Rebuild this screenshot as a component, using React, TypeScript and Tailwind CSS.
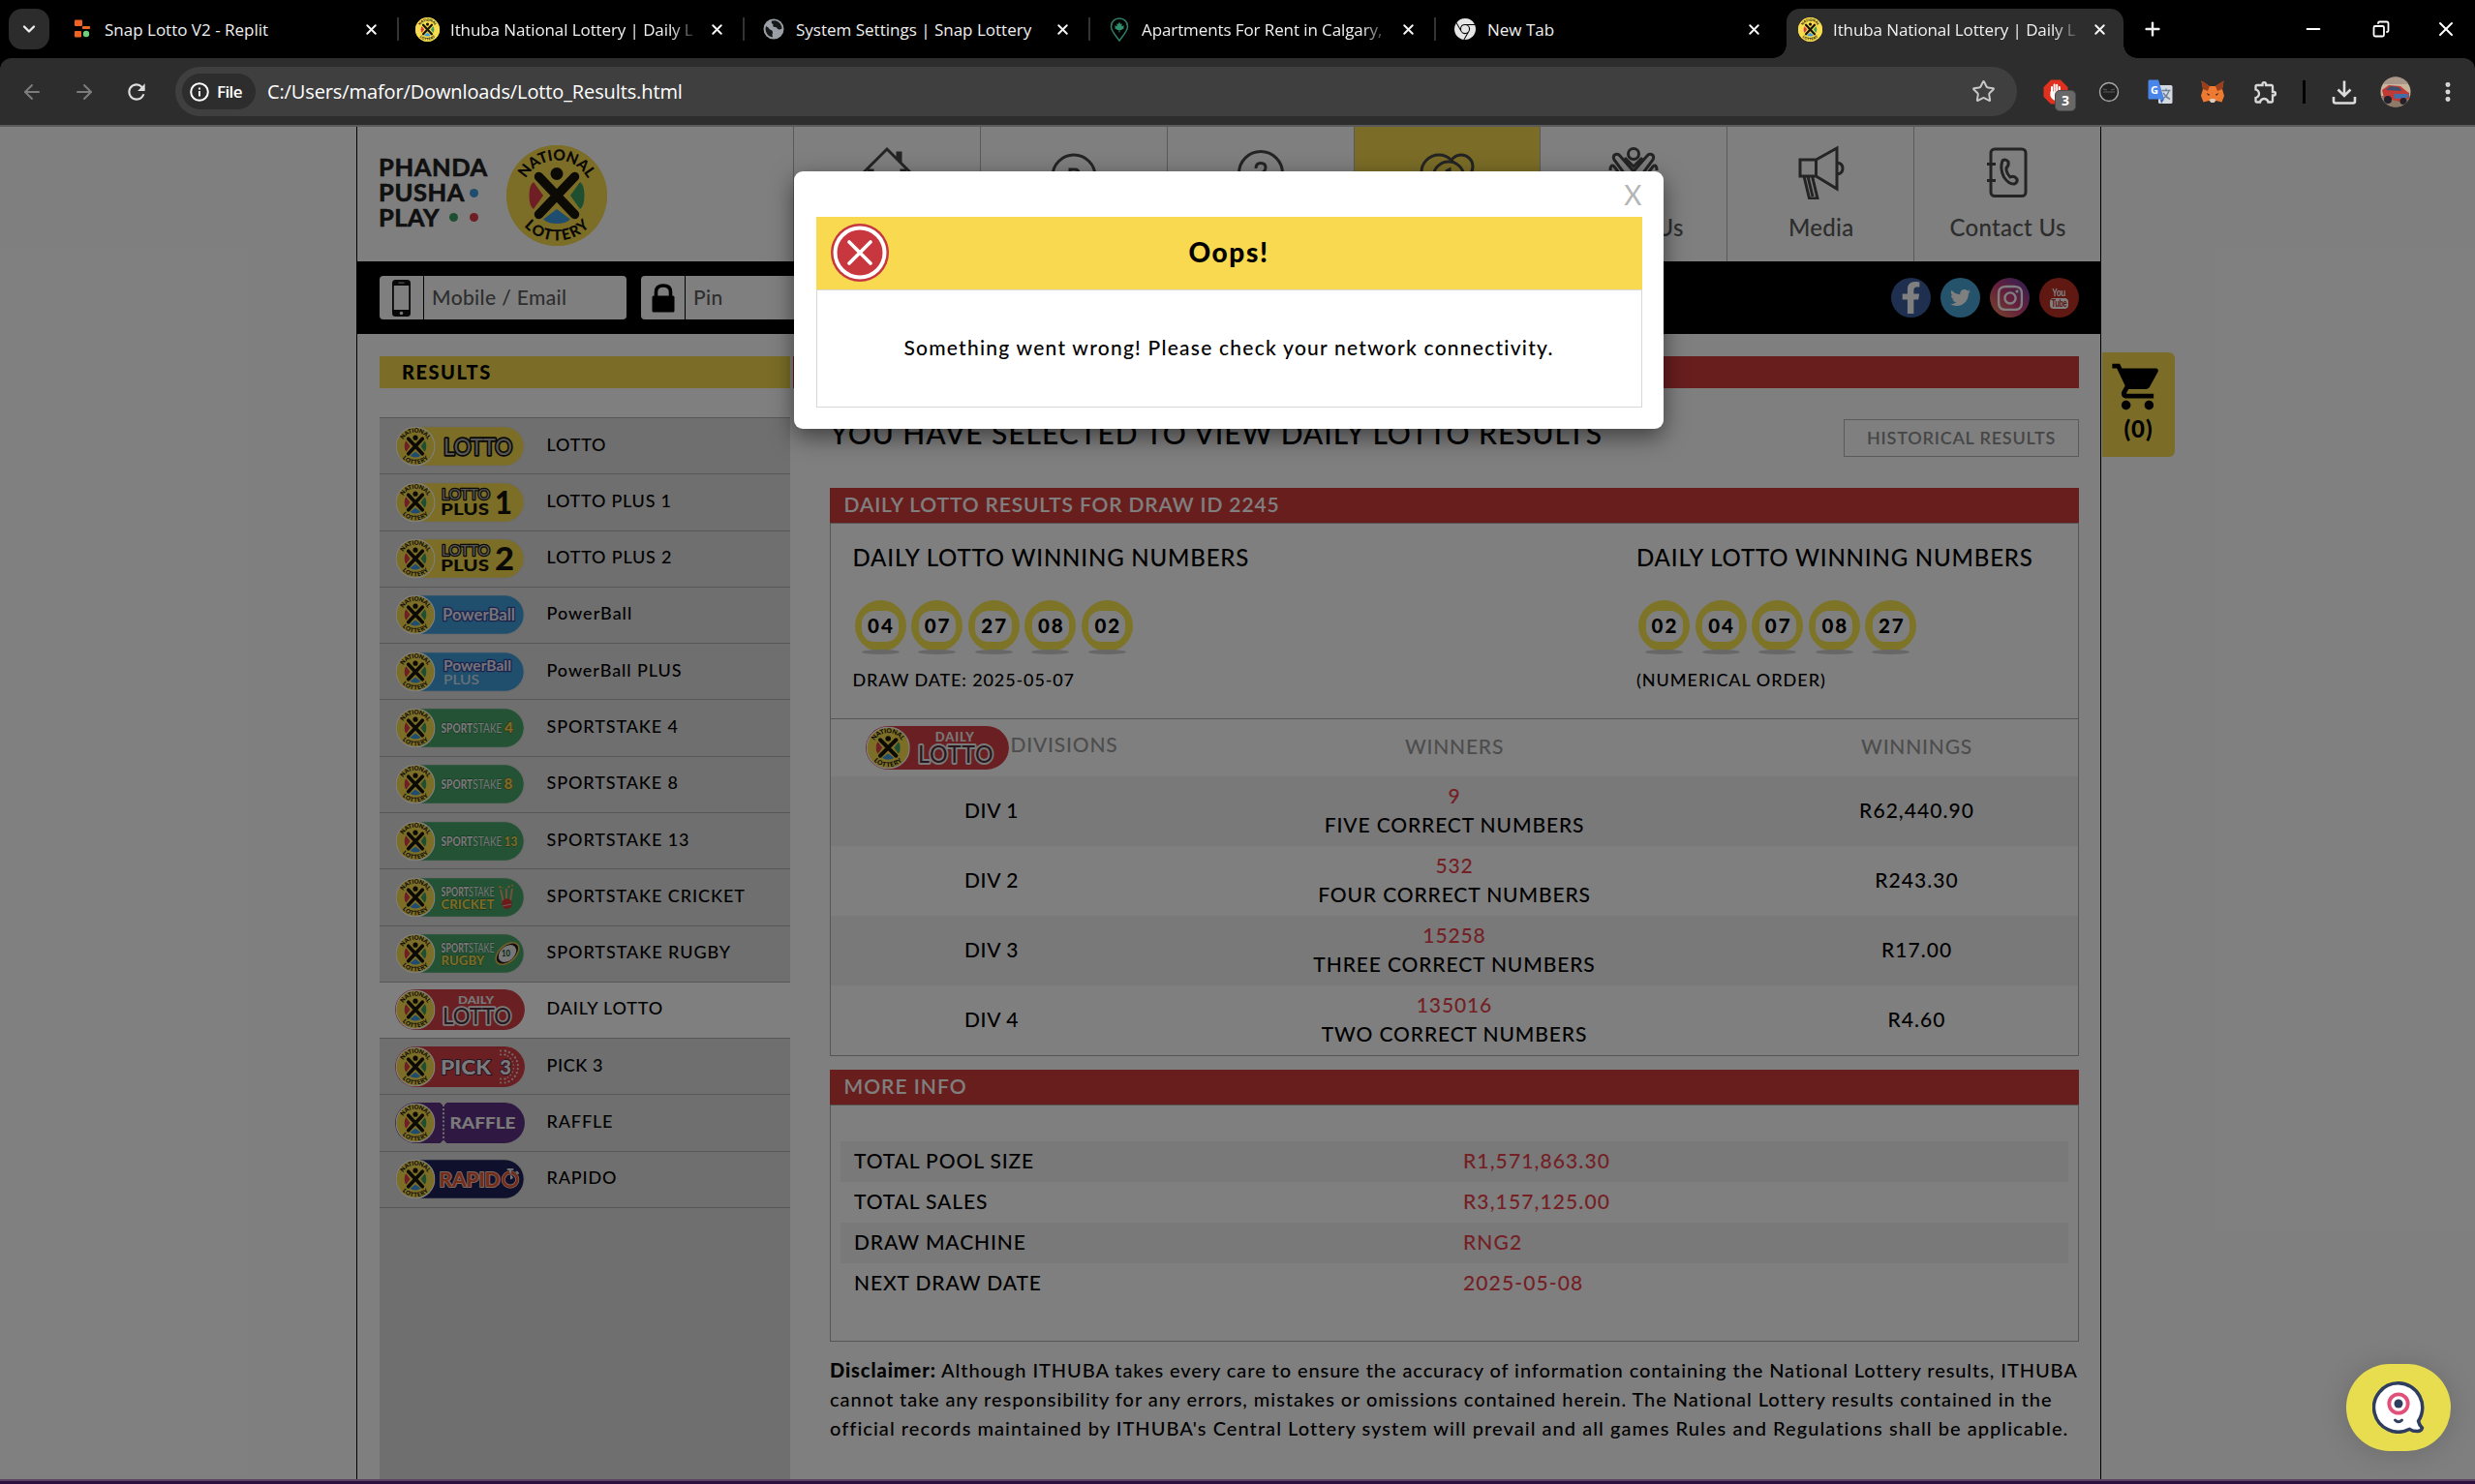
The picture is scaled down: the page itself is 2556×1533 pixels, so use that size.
import React from 'react';
import { ArrowLeft, ArrowRight, ChevronDown, Plus, Star, X, Minus, Copy, MoreVertical } from 'lucide-react';
import { FaTwitter, FaFacebookF, FaInstagram } from 'react-icons/fa';
import { SiGooglechrome } from 'react-icons/si';
import { MdShoppingCart, MdOutlineExtension, MdRefresh } from 'react-icons/md';

/* ---------- National Lottery roundel ---------- */

function Roundel({ id, x = 0, y = 0, size = 104, ring = false, fill = '#f8dc4e' }: { id: string; x?: number; y?: number; size?: number; ring?: boolean; fill?: string }) {
  return (
    <svg x={x} y={y} width={size} height={size} viewBox="0 0 104 104">
      <defs>
        <path id={`${id}-top`} d="M15.5 52 A36.5 36.5 0 0 1 88.5 52" />
        <path id={`${id}-bot`} d="M5.5 52 A46.5 46.5 0 0 0 98.5 52" />
      </defs>
      <circle cx="52" cy="52" r="52" fill={ring ? '#fff' : fill} />
      <circle cx="52" cy="52" r={ring ? 49 : 52} fill={fill} />
      <path d="M38 52 L28 38 Q23.500 41 23.500 52 Q23.500 63 28 66 Z" fill="#dc3c48" />
      <path d="M66 52 L76 38 Q80.500 41 80.500 52 Q80.500 63 76 66 Z" fill="#3f9e63" />
      <path d="M52 66 L38 76.500 Q43 81 52 81 Q61 81 66 76.500 Z" fill="#3f9be0" />
      <path d="M33.500 32.500 L70.500 71.500 M70.500 32.500 L33.500 71.500" stroke="#191408" strokeWidth="9.500" strokeLinecap="round" />
      <circle cx="52" cy="29.500" r="6.500" fill="#191408" />
      <g fontFamily="Lato, sans-serif" fontWeight="900" fontSize="15.500" fill="#14110a">
        <text textAnchor="middle">
          <textPath href={`#${id}-top`} startOffset="50%" textLength="78">NATIONAL</textPath>
        </text>
        <text textAnchor="middle">
          <textPath href={`#${id}-bot`} startOffset="50%" textLength="76">LOTTERY</textPath>
        </text>
      </g>
    </svg>
  );
}

/* ---------- Game badges ---------- */

type Game = { key: string; label: string; color: string; art: React.ReactNode; ring?: boolean; active?: boolean; ls: string };

function Badge({ id, color, art, ring = true, w = 134, h = 42 }: { id: string; color: string; art: React.ReactNode; ring?: boolean; w?: number; h?: number }) {
  return (
    <svg width={w} height={h} viewBox="0 0 134 42" preserveAspectRatio="none" className="block shrink-0">
      <rect x="0.700" y="0.700" width="132.600" height="40.600" rx="20.300" fill={color} stroke={ring ? '#d8d8d8' : color} strokeWidth="1.200" />
      <Roundel id={id} x={0.5} y={0.5} size={41} ring fill="#f8dc4e" />
      <g fontFamily="Lato, sans-serif">{art}</g>
    </svg>
  );
}

function Outlined({ x, y, size, len, children, stroke = '#15130c', fill = '#aaa', sw = 3, weight = 400 }: { x: number; y: number; size: number; len: number; children: string; stroke?: string; fill?: string; sw?: number; weight?: number }) {
  return (
    <text x={x} y={y} fontSize={size} fontWeight={weight} textLength={len} lengthAdjust="spacingAndGlyphs" fill={fill} stroke={stroke} strokeWidth={sw} strokeLinejoin="round" paintOrder="stroke">
      {children}
    </text>
  );
}

function Solid({ x, y, size, len, children, fill, weight = 900 }: { x: number; y: number; size: number; len: number; children: string; fill: string; weight?: number }) {
  return (
    <text x={x} y={y} fontSize={size} fontWeight={weight} textLength={len} lengthAdjust="spacingAndGlyphs" fill={fill}>
      {children}
    </text>
  );
}

const sportStake = (y: number, len = 63, size = 14) => (
  <>
    <Outlined x={47.500} y={y} size={size} len={len * 0.52} weight={900} fill="#f0f0f0" stroke="#1d5a38" sw={1}>SPORT</Outlined>
    <Outlined x={47.500 + len * 0.52} y={y} size={size} len={len * 0.48} weight={400} fill="#f0f0f0" stroke="#1d5a38" sw={0.500}>STAKE</Outlined>
  </>
);

const dailyArt = (
  <>
    <Solid x={65} y={14.500} size={12} len={37} fill="#f0f0f0">DAILY</Solid>
    <Outlined x={49} y={35.500} size={23} len={71} fill="#50303a" stroke="#f4f4f4" sw={3.600}>LOTTO</Outlined>
  </>
);

const games: Game[] = [
  { key: 'lotto', label: 'LOTTO', color: '#f8dc4e', ls: 'tracking-[0.79px]', art: <Outlined x={50} y={29.500} size={24} len={71} sw={3.500}>LOTTO</Outlined> },
  {
    key: 'plus1', label: 'LOTTO PLUS 1', color: '#f8dc4e', ls: 'tracking-[0.75px]',
    art: (<><Outlined x={48} y={18} size={15.500} len={50} sw={2.400}>LOTTO</Outlined><Solid x={47} y={34} size={16.500} len={50} fill="#15130c">PLUS</Solid><Solid x={103} y={32.500} size={33} len={18} fill="#15130c">1</Solid></>),
  },
  {
    key: 'plus2', label: 'LOTTO PLUS 2', color: '#f8dc4e', ls: 'tracking-[0.8px]',
    art: (<><Outlined x={48} y={18} size={15.500} len={50} sw={2.400}>LOTTO</Outlined><Solid x={47} y={34} size={16.500} len={50} fill="#15130c">PLUS</Solid><Solid x={103} y={32.500} size={33} len={20} fill="#15130c">2</Solid></>),
  },
  { key: 'pb', label: 'PowerBall', color: '#3f9edb', ls: 'tracking-[1px]', art: <Outlined x={49} y={27} size={16.500} len={75} weight={700} fill="#e8e8f4" stroke="#35489c" sw={2.600}>PowerBall</Outlined> },
  {
    key: 'pbp', label: 'PowerBall PLUS', color: '#3f9edb', ls: 'tracking-[0.92px]',
    art: (<><Outlined x={50} y={19.500} size={15} len={70} weight={700} fill="#e8e8f4" stroke="#35489c" sw={2.600}>PowerBall</Outlined><Solid x={50} y={34} size={14} len={37} fill="#d5e4f2" weight={500}>PLUS</Solid></>),
  },
  { key: 'ss4', label: 'SPORTSTAKE 4', color: '#46a468', ls: 'tracking-[0.9px]', art: (<>{sportStake(25.500)}<Outlined x={113} y={26} size={15} len={9} weight={900} fill="#f5d94e" stroke="#7a5a20" sw={1.200}>4</Outlined></>) },
  { key: 'ss8', label: 'SPORTSTAKE 8', color: '#46a468', ls: 'tracking-[0.9px]', art: (<>{sportStake(25.500)}<Outlined x={112.500} y={26} size={15} len={9} weight={900} fill="#f5d94e" stroke="#7a5a20" sw={1.200}>8</Outlined></>) },
  { key: 'ss13', label: 'SPORTSTAKE 13', color: '#46a468', ls: 'tracking-[0.92px]', art: (<>{sportStake(25.500)}<Outlined x={112.500} y={25.500} size={13.500} len={14} weight={900} fill="#f5d94e" stroke="#1d5a38" sw={0.800}>13</Outlined></>) },
  {
    key: 'cricket', label: 'SPORTSTAKE CRICKET', color: '#46a468', ls: 'tracking-[0.93px]',
    art: (
      <>
        {sportStake(19.500, 55, 12.500)}
        <Outlined x={47.500} y={32.500} size={12.500} len={55} weight={900} fill="#f5d94e" stroke="#1d5a38" sw={0.800}>CRICKET</Outlined>
        <path d="M109 13 L113 31 M115 12 V30 M121 12 L118 31" stroke="#e8a878" strokeWidth="1.800" />
        <path d="M107 10 L112 11.500 M116 10.500 L122 8.500" stroke="#e8b04e" strokeWidth="1.600" strokeDasharray="3 1.500" />
        <circle cx="115.500" cy="27.500" r="5.200" fill="#d83434" />
        <path d="M111 30 L120 28" stroke="#ddd" strokeWidth="0.800" />
      </>
    ),
  },
  {
    key: 'rugby', label: 'SPORTSTAKE RUGBY', color: '#46a468', ls: 'tracking-[0.94px]',
    art: (
      <>
        {sportStake(19.500, 55, 12.500)}
        <Outlined x={47.500} y={32.500} size={12.500} len={45} weight={900} fill="#f5d94e" stroke="#1d5a38" sw={0.800}>RUGBY</Outlined>
        <g transform="rotate(-42 116 21)">
          <ellipse cx="116" cy="21" rx="14" ry="8.500" fill="#1c1c1c" stroke="#e8bd4e" strokeWidth="1.600" />
          <ellipse cx="116" cy="21" rx="10.500" ry="7.300" fill="#efefef" />
        </g>
        <Solid x={110} y={23.500} size={8.500} len={9} fill="#1d5a38">10</Solid>
      </>
    ),
  },
  { key: 'daily', label: 'DAILY LOTTO', color: '#d43e44', ring: false, active: true, ls: 'tracking-[0.85px]', art: dailyArt },
  {
    key: 'pick3', label: 'PICK 3', color: '#d43e44', ring: false, ls: 'tracking-[0.6px]',
    art: (
      <>
        <Outlined x={47} y={28.500} size={21.500} len={52} weight={900} fill="#f4f4f4" stroke="#3a2a50" sw={1.800}>PICK</Outlined>
        <Outlined x={108} y={28.500} size={21.500} len={12} weight={900} fill="#f4f4f4" stroke="#3a2a50" sw={1.800}>3</Outlined>
        <path d="M109 4.500 A17 17 0 0 1 109 37.500" fill="none" stroke="#f0d0d0" strokeWidth="2.200" strokeDasharray="0.100 4" strokeLinecap="round" transform="translate(5 0)" />
        <path d="M109 8.500 A13 13 0 0 1 109 33.500" fill="none" stroke="#f0c0c0" strokeWidth="1.700" strokeDasharray="0.100 3.600" strokeLinecap="round" transform="translate(4 0)" />
        <path d="M109 4.500 H114 M109 37.500 H114 M109 8.500 H114 M109 33.500 H114" stroke="#f0d0d0" strokeWidth="2" strokeDasharray="0.100 4.500" strokeLinecap="round" />
      </>
    ),
  },
  {
    key: 'raffle', label: 'RAFFLE', color: '#5e3182', ring: false, ls: 'tracking-[0.87px]',
    art: (
      <>
        <path d="M50 3 V39" stroke="#e8e8e8" strokeWidth="2.200" strokeDasharray="0.100 4" strokeLinecap="round" />
        <path d="M46.500 0 L50 3.500 L53.500 0 Z M46.500 42 L50 38.500 L53.500 42 Z" fill="#dedede" />
        <Solid x={56.500} y={26.500} size={17.500} len={68} fill="#f4f4f4">RAFFLE</Solid>
      </>
    ),
  },
  {
    key: 'rapido', label: 'RAPIDO', color: '#1c2058', ls: 'tracking-[0.85px]',
    art: (
      <>
        <Outlined x={45.500} y={28.500} size={20} len={63} weight={700} fill="#e8562e" stroke="#f4d0c4" sw={2}>RAPID</Outlined>
        <circle cx="119" cy="21.500" r="7.200" fill="none" stroke="#f4d0c4" strokeWidth="4.200" />
        <circle cx="119" cy="21.500" r="7.200" fill="none" stroke="#e8562e" strokeWidth="2.600" />
        <path d="M119 21.500 V16.500 A5 5 0 0 1 122 20 Z" fill="#f0f0f0" />
        <path d="M116.500 11 H121.500 M119 11 V14 M125.500 13.500 L127 15" stroke="#e8e0e0" strokeWidth="2" strokeLinecap="round" />
      </>
    ),
  },
];

/* ---------- Browser chrome ---------- */

type Tab = { title: string; icon: React.ReactNode; fade?: boolean; active?: boolean };

const globe = (
  <svg width="22" height="22" viewBox="0 0 22 22">
    <circle cx="11" cy="11" r="10.500" fill="#9aa0a6" />
    <path d="M3 8 Q6 9 7 11.500 Q10 12 10 14.500 Q9 17 10 19.500 Q3 18 2.500 11 Z" fill="#17181a" />
    <path d="M9 2.500 Q8 5 10.500 6 Q9.500 8.500 12 9 Q14.500 8.500 15 11 Q17.500 12 19.500 10.500 Q19 4 13 2.300 Z" fill="#17181a" />
  </svg>
);

const mapleLeaf = (
  <svg width="20" height="25" viewBox="0 0 20 25">
    <path d="M10 1 C15 1 18.500 4.500 18.500 9.500 C18.500 14 14 18.500 10 24 C6 18.500 1.500 14 1.500 9.500 C1.500 4.500 5 1 10 1 Z" fill="none" stroke="#2f7d68" strokeWidth="1.500" />
    <path d="M10 4.500 L11.200 7 L12.800 6.300 L12.300 9 L15 8.500 L14.200 10.500 L15 11.300 L11.800 13 H10.500 V15.500 H9.500 V13 H8.200 L5 11.300 L5.800 10.500 L5 8.500 L7.700 9 L7.200 6.300 L8.800 7 Z" fill="#2f8f6d" />
  </svg>
);

const replit = (
  <svg width="18" height="20" viewBox="0 0 18 20">
    <rect x="1" y="0.500" width="8" height="6.500" rx="1" fill="#f26222" />
    <rect x="9" y="7" width="8" height="3" rx="0.800" fill="#f26222" />
    <rect x="1" y="12" width="7" height="6.500" rx="1" fill="#f26222" />
    <circle cx="13" cy="15" r="3.200" fill="#6fcf7f" />
  </svg>
);

const tabs: Tab[] = [
  { title: 'Snap Lotto V2 - Replit', icon: replit },
  { title: 'Ithuba National Lottery | Daily L', icon: <Roundel id="fav-a" size={25} />, fade: true },
  { title: 'System Settings | Snap Lottery', icon: globe },
  { title: 'Apartments For Rent in Calgary,', icon: mapleLeaf, fade: true },
  { title: 'New Tab', icon: <SiGooglechrome size={22} color="#e6e6e6" /> },
  { title: 'Ithuba National Lottery | Daily L', icon: <Roundel id="fav-b" size={25} />, fade: true, active: true },
];

function BrowserTab({ tab, last }: { tab: Tab; last: boolean }) {
  return (
    <div className="relative flex h-[51px] w-[357px] shrink-0 items-center pl-[10px]">
      {tab.active && (
        <div className="absolute top-0 bottom-0 -left-[2px] w-[348px] rounded-t-[14px] bg-[#2d2d2d]">
          <span className="absolute bottom-0 -left-[14px] h-[14px] w-[14px] bg-[radial-gradient(circle_at_0_0,transparent_13.5px,#2d2d2d_14px)]" />
          <span className="absolute -right-[14px] bottom-0 h-[14px] w-[14px] bg-[radial-gradient(circle_at_100%_0,transparent_13.5px,#2d2d2d_14px)]" />
        </div>
      )}
      <span className="relative -mt-[9px] flex w-[25px] shrink-0 justify-center">{tab.icon}</span>
      <span className={`relative -mt-[7px] ml-[11px] w-[252px] overflow-hidden text-[17px] leading-[24px] whitespace-nowrap text-[#f0f0f0] ${tab.fade ? 'tracking-[-0.1px] [mask-image:linear-gradient(to_right,black_228px,transparent_256px)]' : ''}`}>{tab.title}</span>
      <span className="relative -mt-[9px] ml-[11.500px] flex w-[24px] justify-center"><X size={17} strokeWidth={2.800} color="#f4f4f4" /></span>
      {!last && <span className="relative -mt-[9px] ml-[14.500px] h-[24px] w-[2px] bg-[#333]" />}
    </div>
  );
}

function Chrome() {
  return (
    <div className="font-['Open_Sans',sans-serif]">
      <div className="flex h-[60px] bg-black pt-[9px]">
        <div className="ml-[9px] flex h-[42px] w-[42px] items-center justify-center rounded-[14px] bg-[#2c2c2c]"><ChevronDown size={20} strokeWidth={2.800} color="#eee" /></div>
        <div className="ml-[11px] flex">
          {tabs.map((t, i) => <BrowserTab key={i} tab={t} last={i >= tabs.length - 2} />)}
        </div>
        <Plus size={22} strokeWidth={2.600} color="#f0f0f0" className="mt-[10px] ml-[8px]" />
        <div className="mt-[9px] ml-auto flex items-center self-start pr-[18px]">
          <Minus size={22} strokeWidth={2} color="#fff" />
          <Copy size={18} strokeWidth={2.400} color="#fff" className="mr-[46px] ml-[50px] -scale-x-100" />
          <X size={24} strokeWidth={2} color="#fff" />
        </div>
      </div>
      <div className="h-[69px] bg-black">
        <div className="flex h-full items-center rounded-t-[12px] bg-[#2d2d2d]">
          <ArrowLeft size={24} strokeWidth={2} color="#7c7c7c" className="ml-[21px]" />
          <ArrowRight size={24} strokeWidth={2} color="#7c7c7c" className="ml-[30px]" />
          <MdRefresh size={26} color="#dedede" className="ml-[29px]" />
          <div className="ml-[27px] flex h-[51px] w-[1902px] items-center rounded-full bg-[#3f3f3f] pl-[7px]">
            <div className="flex h-[37px] w-[76px] items-center rounded-full bg-[#2d2d2d] pl-[8px] text-white">
              <svg width="20" height="20" viewBox="0 0 20 20" fill="none" stroke="#fff" strokeWidth="2">
                <circle cx="10" cy="10" r="8.800" />
                <path d="M10 9 V14.500 M10 5.500 V7.500" />
              </svg>
              <span className="ml-[8px] text-[17px] leading-[24px] font-semibold tracking-[-0.6px]">File</span>
            </div>
            <span className="ml-[12px] text-[20px] leading-[28px] tracking-[-0.12px] text-white">C:/Users/mafor/Downloads/Lotto_Results.html</span>
            <Star size={25} strokeWidth={1.900} color="#c8c8c8" className="mr-[22.500px] ml-auto" />
          </div>
          <div className="ml-[27px] flex items-center">
            <span className="relative flex">
              <svg width="26" height="26" viewBox="0 0 26 26">
                <path d="M8 0.500 H18 L25.500 8 V18 L18 25.500 H8 L0.500 18 V8 Z" fill="#e0301e" />
                <path d="M9 15 V8 M11.600 14 V5.500 M14.200 14 V5.800 M16.800 15 V8" stroke="#fff" strokeWidth="2" strokeLinecap="round" />
                <path d="M8 13 H17.800 V17 Q17 21.500 13 21.500 Q10 21 8 17 Z M17 17 L19.500 13.500" fill="#fff" stroke="#fff" strokeWidth="1.200" />
              </svg>
              <span className="absolute top-[11px] left-[12px] flex h-[22px] w-[22px] items-center justify-center rounded-[5px] border border-[#4a4a4a] bg-[#686868] text-[14px] font-bold text-white">3</span>
            </span>
            <svg width="22" height="22" viewBox="0 0 22 22" className="ml-[31px]">
              <circle cx="11" cy="11" r="9.500" fill="#202020" stroke="#a8a8a8" strokeWidth="1.400" />
              <path d="M5 11 H17 M5 8 L9 9 M17 8 L13 9" stroke="#5a5a5a" strokeWidth="1.200" />
            </svg>
            <svg width="26" height="26" viewBox="0 0 26 26" className="ml-[29px]">
              <rect x="11" y="6" width="14.500" height="19" rx="1.500" fill="#d5dae0" />
              <path d="M14.500 11.500 H23.500 M19 9.500 V11.500 M22 11.500 Q20.500 17 15.500 20 M16 14 Q19 18.500 23 20.500" fill="none" stroke="#6d8296" strokeWidth="1.400" />
              <path d="M1.500 0.500 H11 L17 20.500 H1.500 Q0.500 20.500 0.500 19 V2 Q0.500 0.500 1.500 0.500 Z" fill="#4a86ea" />
              <path d="M13 20.500 H17 L14 25 Z" fill="#2f5fb8" />
              <text x="3" y="14.500" fontSize="11" fontWeight="700" fill="#fff">G</text>
            </svg>
            <svg width="26" height="24" viewBox="0 0 26 24" className="ml-[28px]">
              <path d="M1.500 0.500 L10 6 H16 L24.500 0.500 L23 9 L25 16 L22.500 22.500 L16.500 21 L14.500 23 H11.500 L9.500 21 L3.500 22.500 L1 16 L3 9 Z" fill="#ee7a32" />
              <path d="M1.500 0.500 L10 6 L8 11 L3 9 Z M24.500 0.500 L16 6 L18 11 L23 9 Z" fill="#9a3f1c" />
              <path d="M6.500 13 L10 14.500 L9 16 Z M19.500 13 L16 14.500 L17 16 Z" fill="#2c2320" />
              <path d="M9.500 20 L11.500 23 H14.500 L16.500 20 L14.500 19 H11.500 Z" fill="#d8ccc0" />
            </svg>
            <MdOutlineExtension size={28} color="#d8d8d8" className="ml-[28px]" />
            <span className="ml-[24px] h-[24px] w-[3px] bg-black" />
            <svg width="26" height="26" viewBox="0 0 26 26" fill="none" stroke="#dcdcdc" strokeWidth="2.600" className="ml-[27px]">
              <path d="M13 1.500 V16 M6.500 10.500 L13 17 L19.500 10.500 M2 18 V22.500 Q2 24.500 4 24.500 H22 Q24 24.500 24 22.500 V18" />
            </svg>
            <svg width="32" height="32" viewBox="0 0 32 32" className="ml-[24px]">
              <defs><clipPath id="avatar"><circle cx="16" cy="16" r="15.500" /></clipPath></defs>
              <g clipPath="url(#avatar)">
                <rect width="32" height="32" fill="#c7b49a" />
                <rect width="32" height="8" fill="#a9978a" />
                <path d="M0 20 H32 V32 H0 Z" fill="#8d7a68" />
                <path d="M2 14 L9 9 L21 10 L27 15 L30 17 V23 L20 26 L4 22 Z" fill="#c23a35" />
                <path d="M6 14 L11 10 L19 11 L23 15 Z" fill="#39506e" />
                <path d="M14 18 L29 18 V22 L15 23 Z" fill="#3f6ea8" />
                <circle cx="8" cy="24" r="4" fill="#23222a" />
                <circle cx="24" cy="25.500" r="3.500" fill="#23222a" />
              </g>
            </svg>
            <MoreVertical size={26} strokeWidth={2.600} color="#dcdcdc" className="ml-[25px]" />
          </div>
        </div>
      </div>
      <div className="h-[2px] bg-[#5a5a5a]" />
    </div>
  );
}

/* ---------- Site header ---------- */

const homeIcon = (
  <svg width="64" height="56" viewBox="0 0 64 56">
    <path d="M6 30 L32 4 L58 30 M12 26 H17 V52 H47 V26 H52 M43 8 V13 L46 17 V8 Z" />
  </svg>
);
const playIcon = (
  <svg width="64" height="56" viewBox="0 0 64 56">
    <circle cx="32" cy="32" r="22" />
    <path d="M28 40 V25 H33 Q37 25 37 29 Q37 33 33 33 H28" />
  </svg>
);
const helpIcon = (
  <svg width="64" height="56" viewBox="0 0 64 56">
    <circle cx="32" cy="29" r="22.500" />
    <path d="M27 24 Q27 18.500 32 18.500 Q37 18.500 37 23 Q37 27 32 29 V33" />
  </svg>
);
const resultsIcon = (
  <svg width="64" height="56" viewBox="0 0 64 56">
    <circle cx="47" cy="22" r="12" />
    <circle cx="24" cy="28" r="18" />
    <circle cx="34" cy="33" r="16" fill="#f6da4e" />
    <path d="M31 27 L35 25 V40" />
  </svg>
);
const aboutIcon = (
  <svg width="64" height="56" viewBox="0 0 64 56">
    <circle cx="32" cy="9" r="5.500" />
    <path d="M12 15 Q10 11 13.500 9.500 Q16 8.500 18 11 L32 27 L46 11 Q48 8.500 50.500 9.500 Q54 11 52 15 L38 34 V54 H26 V34 Z M23 13 L32 22 L41 13 M8 26 Q8 19 12 22 L24 38 M56 26 Q56 19 52 22 L40 38 M7 34 L22 50 M57 34 L42 50" />
  </svg>
);
const mediaIcon = (
  <svg width="64" height="56" viewBox="0 0 64 56">
    <path d="M11 15 H27.500 V32 H11 Z M27.500 15 L49 3 V45 L27.500 32 M49 18 Q55 18.500 55 24 Q55 29.500 49 30 M15 32 L20.500 55 H29 L23.500 32 M19 32 L24 53" />
  </svg>
);
const contactIcon = (
  <svg width="64" height="56" viewBox="0 0 64 56">
    <rect x="15" y="4" width="36" height="48.500" rx="4" />
    <path d="M11 19.500 H20 M11 36.500 H20" />
    <path d="M27 16 Q30 13.500 33 17 Q34 21 31 23.500 Q30.500 28 35 33 Q39 31 42 35 Q43 38 39.500 40 Q34 41 28.500 33 Q24 24 27 16 Z" />
  </svg>
);

const nav: { icon: React.ReactNode; label?: string; active?: boolean }[] = [
  { icon: homeIcon },
  { icon: playIcon },
  { icon: helpIcon },
  { icon: resultsIcon, active: true },
  { icon: aboutIcon, label: 'About Us' },
  { icon: mediaIcon, label: 'Media' },
  { icon: contactIcon, label: 'Contact Us' },
];

function Header() {
  return (
    <div className="flex h-[139px]">
      <div className="flex w-[450px] shrink-0 pt-[19px] pl-[22px]">
        <div className="mt-[9px] w-[132px] text-[25.5px] leading-[26px] font-bold text-[#202020] [-webkit-text-stroke:0.6px_#202020]">
          <div className="tracking-[0.6px]">PHANDA</div>
          <div className="flex w-[103px] items-center justify-between tracking-[0.6px]">PUSHA<span className="mt-[3px] h-[9px] w-[9px] rounded-full bg-[#3f9be0]" /></div>
          <div className="flex w-[103px] items-center tracking-[0.4px]">PLAY<span className="mt-[1px] mr-[12px] ml-auto h-[9px] w-[9px] rounded-full bg-[#3f9e63]" /><span className="mt-[1px] h-[9px] w-[9px] rounded-full bg-[#dc3c48]" /></div>
        </div>
        <Roundel id="brand" size={104} />
      </div>
      <div className="grid flex-1 grid-cols-7">
        {nav.map((n, i) => (
          <div key={i} className={`flex flex-col items-center border-l border-[#b4b4b4] pt-[19px] ${n.active ? 'bg-[#f6da4e]' : ''}`}>
            <span className="[&_svg]:fill-none [&_svg]:stroke-[#484848] [&_svg]:[stroke-width:3]">{n.icon}</span>
            <span className="mt-[14px] pl-px text-[24px] leading-[30px] font-medium tracking-[0.3px] text-[#5a5a5a]">{n.label}</span>
          </div>
        ))}
      </div>
    </div>
  );
}

function LoginBar() {
  return (
    <div className="flex h-[75px] items-center bg-black pr-[22px] pl-[23px] text-[21px] font-medium tracking-[0.37px] text-[#5c5c5c]">
      <div className="flex h-[45px] w-[255px] items-center overflow-hidden rounded-[4px] bg-white">
        <span className="flex h-full w-[46px] items-center justify-center border-r-[1.500px] border-black">
          <svg width="19" height="38" viewBox="0 0 19 38">
            <rect width="19" height="38" rx="3.500" fill="#111" />
            <rect x="1.800" y="6" width="15.400" height="25" fill="#fff" />
            <rect x="6.500" y="2.500" width="6" height="1.300" fill="#999" />
            <circle cx="9.500" cy="34.500" r="1.800" fill="#eee" />
          </svg>
        </span>
        <span className="pb-[2px] pl-[8px]">Mobile / Email</span>
      </div>
      <div className="ml-[15px] flex h-[45px] w-[255px] items-center overflow-hidden rounded-[4px] bg-white">
        <span className="flex h-full w-[46px] items-center justify-center border-r-[1.500px] border-black">
          <svg width="24" height="30" viewBox="0 0 24 30">
            <path d="M4.500 13 V8.500 Q4.500 2 12 2 Q19.500 2 19.500 8.500 V13" fill="none" stroke="#000" strokeWidth="3.600" />
            <rect x="0.500" y="12.500" width="23" height="17" rx="1.500" fill="#000" />
          </svg>
        </span>
        <span className="pb-[2px] pl-[8px]">Pin</span>
      </div>
      <div className="ml-auto flex gap-[10px]">
        <span className="flex h-[41px] w-[41px] items-center justify-center overflow-hidden rounded-full bg-[#3f5f9f]"><FaFacebookF size={33} color="#fff" /></span>
        <span className="flex h-[41px] w-[41px] items-center justify-center rounded-full bg-[#4ba6d6]"><FaTwitter size={21} color="#fff" /></span>
        <span className="flex h-[41px] w-[41px] items-center justify-center rounded-full bg-linear-to-tr from-[#f0884a] via-[#c83c78] to-[#5a34a8]"><FaInstagram size={30} color="#fff" /></span>
        <span className="flex h-[41px] w-[41px] flex-col items-center justify-center rounded-full bg-[#c03024] font-['Liberation_Sans',sans-serif] text-[11px] leading-[11px] font-bold tracking-[-0.6px] text-white">
          <span className="scale-x-75">You</span>
          <span className="flex h-[11px] w-[19px] items-center justify-center rounded-[4px] bg-white text-[#c03024]"><span className="scale-x-75 text-[10px]">Tube</span></span>
        </span>
      </div>
    </div>
  );
}

/* ---------- Results ---------- */

function Sidebar() {
  return (
    <div className="w-[424px] shrink-0">
      <div className="h-[33px] bg-[#f6da4e] pl-[23px] text-[20px] leading-[32px] font-black tracking-[1.5px] text-black">RESULTS</div>
      <div className="mt-[30px] h-[1100px] bg-[#dedede]">
        {games.map((g) => (
          <div key={g.key} className={`flex h-[58.29px] items-center border-t-[1.500px] border-[#b0b0b0] pl-[15.500px] ${g.active ? 'bg-white' : ''}`}>
            <Badge id={g.key} color={g.color} art={g.art} ring={g.ring} />
            <span className={`-mt-[4px] ml-[23px] text-[18px] leading-[24px] font-medium whitespace-nowrap text-black ${g.ls}`}>{g.label}</span>
          </div>
        ))}
        <div className="h-px bg-[#b0b0b0]" />
      </div>
    </div>
  );
}

function Balls({ numbers }: { numbers: string[] }) {
  return (
    <div className="mt-[29px] ml-[2px] flex gap-[5.600px]">
      {numbers.map((n) => (
        <div key={n} className="flex w-[53px] flex-col-reverse items-center">
          <span className="-mt-[2px] h-[5px] w-[39px] rounded-[50%] bg-[#cfcfcf]" />
          <div className="flex h-[53px] w-[53px] items-center justify-center rounded-full bg-[#fae850]">
            <span className="flex h-[32px] w-[38px] items-center justify-center rounded-[13px] bg-white pb-px pl-[2px] text-[20.5px] font-black tracking-[2px] text-black">{n}</span>
          </div>
        </div>
      ))}
    </div>
  );
}

function RedBar({ children, tracking }: { children: string; tracking: string }) {
  return <div className={`h-[36px] bg-[#d23c3c] pl-[14.500px] text-[21px] leading-[34px] font-semibold text-white ${tracking}`}>{children}</div>;
}

const divisions = [
  ['DIV 1', '9', 'FIVE CORRECT NUMBERS', 'R62,440.90'],
  ['DIV 2', '532', 'FOUR CORRECT NUMBERS', 'R243.30'],
  ['DIV 3', '15258', 'THREE CORRECT NUMBERS', 'R17.00'],
  ['DIV 4', '135016', 'TWO CORRECT NUMBERS', 'R4.60'],
];

const info = [
  ['TOTAL POOL SIZE', 'R1,571,863.30'],
  ['TOTAL SALES', 'R3,157,125.00'],
  ['DRAW MACHINE', 'RNG2'],
  ['NEXT DRAW DATE', '2025-05-08'],
];

function Results() {
  return (
    <div className="ml-[3px] w-[1328px]">
      <div className="h-[33px] bg-[#d23c3c]" />
      <div className="ml-[38px] pt-[31px] font-medium text-black">
        <div className="flex h-[40px] items-start justify-between">
          <h1 className="text-[30px] leading-[30px] tracking-[0.94px] whitespace-nowrap">YOU HAVE SELECTED TO VIEW DAILY LOTTO RESULTS</h1>
          <span className="mt-[1px] flex h-[39px] w-[243px] items-center justify-center border-[1.500px] border-[#b4b4b4] pb-px text-[18px] font-semibold tracking-[0.8px] text-[#8c8c8c]">HISTORICAL RESULTS</span>
        </div>

        <div className="mt-[32px]">
          <RedBar tracking="tracking-[0.86px]">DAILY LOTTO RESULTS FOR DRAW ID 2245</RedBar>
          <div className="border border-[#aaa]">
            <div className="flex h-[201px] pl-[22.500px]">
              <div className="w-[809.500px] pt-[20px]">
                <h2 className="text-[24px] leading-[30px] tracking-[0.82px]">DAILY LOTTO WINNING NUMBERS</h2>
                <Balls numbers={['04', '07', '27', '08', '02']} />
                <p className="mt-[14px] text-[18px] leading-[24px] tracking-[0.88px]">DRAW DATE: 2025-05-07</p>
              </div>
              <div className="pt-[20px]">
                <h2 className="text-[24px] leading-[30px] tracking-[0.82px]">DAILY LOTTO WINNING NUMBERS</h2>
                <Balls numbers={['02', '04', '07', '08', '27']} />
                <p className="mt-[14px] text-[18px] leading-[24px] tracking-[0.98px]">(NUMERICAL ORDER)</p>
              </div>
            </div>
            <div className="grid h-[60px] grid-cols-[332px_622px_334px] items-center border-t border-[#aaa] text-[21px] tracking-[0.78px] text-[#9a9a9a]">
              <div className="flex items-center pl-[36px]">
                <Badge id="table" color="#d43e44" art={dailyArt} ring={false} w={148} h={45} />
                <span className="-mt-[7px] ml-[1.500px]">DIVISIONS</span>
              </div>
              <div className="-mt-[3px] pl-[2px] text-center">WINNERS</div>
              <div className="-mt-[3px] pl-[1px] text-center">WINNINGS</div>
            </div>
            {divisions.map(([div, count, text, amount], i) => (
              <div key={div} className={`grid h-[72px] grid-cols-[332px_622px_334px] items-center pb-[2px] text-center text-[21px] leading-[30px] tracking-[0.88px] ${i % 2 === 0 ? 'bg-[#f2f2f2]' : 'bg-white'}`}>
                <div className="tracking-[0.57px]">{div}</div>
                <div className="pl-[2px]">
                  <div className="text-[#e8404a]">{count}</div>
                  <div>{text}</div>
                </div>
                <div className="pl-px tracking-[1.05px]">{amount}</div>
              </div>
            ))}
          </div>
        </div>

        <div className="mt-[14px]">
          <RedBar tracking="tracking-[1px]">MORE INFO</RedBar>
          <div className="h-[245px] border border-[#aaa] px-[10px] pt-[37px]">
            {info.map(([k, v], i) => (
              <div key={k} className={`flex h-[42px] items-center pb-[2px] pl-[14px] text-[21px] tracking-[0.88px] ${i % 2 === 0 ? 'bg-[#f2f2f2]' : 'bg-white'}`}>
                <span className="w-[629px]">{k}</span>
                <span className="tracking-[1.12px] text-[#e8404a]">{v}</span>
              </div>
            ))}
          </div>
        </div>

        <div className="mt-[14px] text-[20px] leading-[30px] whitespace-nowrap">
          <div className="tracking-[0.92px]"><b className="font-black">Disclaimer:</b> Although ITHUBA takes every care to ensure the accuracy of information containing the National Lottery results, ITHUBA</div>
          <div className="tracking-[0.95px]">cannot take any responsibility for any errors, mistakes or omissions contained herein. The National Lottery results contained in the</div>
          <div className="tracking-[1.05px]">official records maintained by ITHUBA's Central Lottery system will prevail and all games Rules and Regulations shall be applicable.</div>
        </div>
      </div>
    </div>
  );
}

/* ---------- Overlays ---------- */

function ErrorModal() {
  return (
    <div className="absolute top-[46px] left-[820px] h-[266px] w-[898px] rounded-[9px] bg-white px-[22.500px] shadow-[0_8px_24px_rgba(0,0,0,0.5)]">
      <div className="flex h-[47px] justify-end pt-[9px]">
        <span className="text-[28px] leading-[30px] text-[#b5b5b5]">X</span>
      </div>
      <div className="relative flex h-[75px] items-center justify-center bg-[#f8d94f]">
        <svg width="60" height="60" viewBox="0 0 60 60" className="absolute top-[7px] left-[15px]">
          <circle cx="30" cy="30" r="30" fill="#c8373e" />
          <circle cx="30" cy="30" r="27.500" fill="#fff" />
          <circle cx="30" cy="30" r="23.500" fill="#c8373e" />
          <path d="M19 19 L41 41 M41 19 L19 41" stroke="#fff" strokeWidth="3.600" strokeLinecap="round" />
        </svg>
        <span className="pb-[3px] text-[28px] leading-[34px] font-black tracking-[1.600px] text-black">Oops!</span>
      </div>
      <div className="flex h-[122px] items-center justify-center border border-[#d8d8d8] pb-[2px] text-[21px] font-medium tracking-[1.240px] text-black">
        <span>Something went wrong! Please check your network connectivity.</span>
      </div>
    </div>
  );
}

function ChatButton() {
  return (
    <div className="absolute top-[1278px] left-[2423px] flex h-[90px] w-[108px] items-center justify-center rounded-[45px] bg-[#e8dd4f] shadow-[0_2px_30px_rgba(0,0,0,0.16)]">
      <svg width="54" height="54" viewBox="0 0 54 54">
        <path d="M27 1.800 A25.200 25.200 0 0 1 47.500 41 Q48.500 45.500 51.500 48 Q50.500 51.500 46.500 51.500 Q41.500 51.500 38.500 49.300 A25.200 25.200 0 1 1 27 1.800 Z" fill="#fff" stroke="#2f3d5f" strokeWidth="3.500" strokeLinejoin="round" />
        <circle cx="27" cy="23" r="9.700" fill="#fff" stroke="#e0507a" strokeWidth="3.800" />
        <circle cx="27" cy="23" r="4.500" fill="#2f3d5f" />
        <path d="M23.500 40 Q27 43.500 30.500 40" fill="none" stroke="#2f3d5f" strokeWidth="3" strokeLinecap="round" />
      </svg>
    </div>
  );
}

export default function App() {
  return (
    <div className="h-[1533px] w-[2556px] overflow-hidden bg-black">
      <Chrome />
      <div className="relative h-[1397px] overflow-hidden bg-white font-['Lato',sans-serif]">
        <div className="flex items-start pl-[368px]">
          <div className="h-[1400px] w-[1802px] shrink-0 border-x border-black">
            <Header />
            <LoginBar />
            <div className="flex pt-[23px] pl-[23px]">
              <Sidebar />
              <Results />
            </div>
          </div>
          <div className="mt-[233px] ml-[1px] flex h-[108px] w-[75px] flex-col items-center rounded-r-[6px] bg-[#f6da4e] pt-[7px] text-black">
            <MdShoppingCart size={57} className="mr-[3px]" />
            <span className="text-[24px] leading-[30px] font-black tracking-[1px]">(0)</span>
          </div>
        </div>
        <div className="absolute inset-0 bg-black/50" />
        <ErrorModal />
        <ChatButton />
      </div>
      <div className="h-[5px] border-t-2 border-[#5a4460] bg-[#2c0f3c]" />
    </div>
  );
}
